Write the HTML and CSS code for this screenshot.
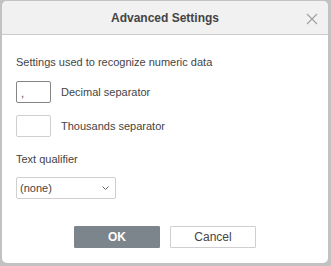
FILE: index.html
```html
<!DOCTYPE html>
<html lang="en">

<head>
  <meta charset="utf-8">
  <title>Advanced Settings</title>
  <link rel="stylesheet" href="styles.css">
</head>

<body>
  <div class="dialog">
    <div class="dialog-header">
      <span class="dialog-title">Advanced Settings</span>
      <span class="close-btn">
        <svg width="12" height="12" viewBox="0 0 12 12">
          <path d="M1 1L11 11M11 1L1 11" stroke="#a0a0a0" stroke-width="1.1" fill="none"/>
        </svg>
      </span>
    </div>

    <div class="dialog-body">
      <p class="section-label">Settings used to recognize numeric data</p>

      <div class="field-row">
        <div class="text-input focused">,</div>
        <span class="field-label">Decimal separator</span>
      </div>
      <div class="field-row">
        <div class="text-input"></div>
        <span class="field-label">Thousands separator</span>
      </div>

      <p class="section-label qualifier-label">Text qualifier</p>
      <div class="combo">
        <span>(none)</span>
        <svg width="7" height="4" viewBox="0 0 7 4">
          <path d="M0.5 0.5L3.5 3.5L6.5 0.5" stroke="#666" stroke-width="1" fill="none"/>
        </svg>
      </div>
    </div>

    <div class="dialog-footer">
      <div class="btn btn-primary">OK</div>
      <div class="btn">Cancel</div>
    </div>
  </div>
</body>

</html>
```

FILE: styles.css
```css
html, body {
  margin: 0;
  padding: 0;
  height: 100%;
}

body {
  background-color: #c2c2c2;
  font-family: "Liberation Sans", Arial, sans-serif;
  font-size: 11px;
  color: #444;
  box-sizing: border-box;
  padding: 1px 3px 3px 2px;
}

.dialog {
  height: 100%;
  background-color: #fff;
  border-radius: 5px;
  overflow: hidden;
  display: flex;
  flex-direction: column;
}

.dialog-header {
  height: 33px;
  background-color: #f1f1f1;
  border-bottom: 1px solid #cbcbcb;
  display: flex;
  align-items: center;
  justify-content: center;
  position: relative;
}

.dialog-title {
  font-size: 12px;
  font-weight: bold;
  color: #444;
}

.close-btn {
  position: absolute;
  right: 10px;
  top: 12px;
  width: 12px;
  height: 12px;
  display: flex;
}

.dialog-body {
  padding: 20px 14px 0 14px;
  display: flex;
  flex-direction: column;
}

.section-label {
  margin: 0;
  line-height: 14px;
}

.field-row {
  display: flex;
  align-items: center;
  margin-top: 12px;
}

.text-input {
  height: 20px;
  width: 29px;
  border: 1px solid #cfcfcf;
  border-radius: 2px;
  line-height: 22px;
  padding-left: 4px;
}

.text-input.focused {
  border-color: #848484;
}

.field-label {
  margin-left: 10px;
}

.qualifier-label {
  margin-top: 15px;
}

.combo {
  margin-top: 11px;
  width: 89px;
  height: 20px;
  border: 1px solid #cfcfcf;
  border-radius: 2px;
  display: flex;
  align-items: center;
  justify-content: space-between;
  padding: 0 6px 0 3px;
}

.dialog-footer {
  display: flex;
  justify-content: center;
  gap: 10px;
  margin-top: 27px;
}

.btn {
  width: 84px;
  height: 20px;
  border: 1px solid #cfcfcf;
  border-radius: 1px;
  display: flex;
  align-items: center;
  justify-content: center;
  font-size: 12px;
  color: #444;
}

.btn-primary {
  background-color: #7d858c;
  border-color: #7d858c;
  color: #fff;
  font-weight: bold;
}
```
